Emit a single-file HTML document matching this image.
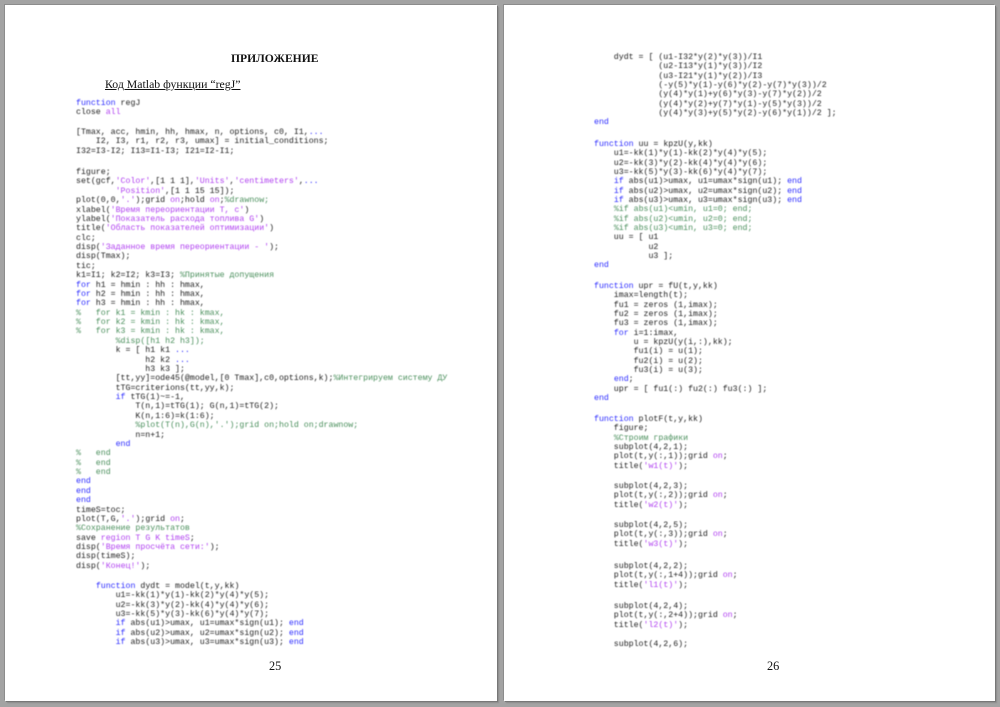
<!DOCTYPE html>
<html lang="ru">
<head>
<meta charset="utf-8">
<title>Приложение</title>
<style>
html,body{margin:0;padding:0;background:#a3a3a3;width:1000px;height:707px;overflow:hidden}
.page{position:absolute;top:5px;height:696px;background:#fff;box-shadow:1px 1px 0 #777,2px 2px 1px #8c8c8c,-1px -1px 0 #8c8c8c}
#p1{left:5px;width:492px}
#p2{left:504px;width:491px}
.t{position:absolute;filter:blur(.35px)}
pre{position:absolute;margin:0;font:8.25px/9.35px "Liberation Mono","DejaVu Sans Mono",monospace;color:#1c1c1c;white-space:pre;filter:blur(.4px);margin-top:1px}
.serif{font-family:"Liberation Serif","Noto Serif CJK SC",serif;color:#111;white-space:nowrap}
.k{color:#2a2aff}
.s{color:#b040f0}
.c{color:#4a8f5c}
</style>
</head>
<body>
<div class="page" id="p1"></div>
<div class="page" id="p2"></div>

<div class="t serif" style="left:231px;top:52px;font-size:11.6px;font-weight:bold;line-height:14px">ПРИЛОЖЕНИЕ</div>
<div class="t serif" style="left:105px;top:77px;font-size:11.8px;line-height:14px;text-decoration:underline">Код Matlab функции “regJ”</div>
<div class="t serif" style="left:269px;top:659px;font-size:12.3px;line-height:14px">25</div>
<div class="t serif" style="left:767px;top:659px;font-size:12.3px;line-height:14px">26</div>

<pre style="left:76px;top:98px"><span class="k">function</span> regJ
close <span class="s">all</span></pre>

<pre style="left:76px;top:127px">[Tmax, acc, hmin, hh, hmax, n, options, c0, I1,<span class="k">...</span>
    I2, I3, r1, r2, r3, umax] = initial_conditions;
I32=I3-I2; I13=I1-I3; I21=I2-I1;</pre>

<pre style="left:76px;top:167px;line-height:9.37px">figure;
set(gcf,<span class="s">'Color'</span>,[1 1 1],<span class="s">'Units'</span>,<span class="s">'centimeters'</span>,<span class="k">...</span>
        <span class="s">'Position'</span>,[1 1 15 15]);
plot(0,0,<span class="s">'.'</span>);grid <span class="s">on</span>;hold <span class="s">on</span>;<span class="c">%drawnow;</span>
xlabel(<span class="s">'Время переориентации Т, с'</span>)
ylabel(<span class="s">'Показатель расхода топлива G'</span>)
title(<span class="s">'Область показателей оптимизации'</span>)
clc;
disp(<span class="s">'Заданное время переориентации - '</span>);
disp(Tmax);
tic;
k1=I1; k2=I2; k3=I3; <span class="c">%Принятые допущения</span>
<span class="k">for</span> h1 = hmin : hh : hmax,
<span class="k">for</span> h2 = hmin : hh : hmax,
<span class="k">for</span> h3 = hmin : hh : hmax,
<span class="c">%   for k1 = kmin : hk : kmax,</span>
<span class="c">%   for k2 = kmin : hk : kmax,</span>
<span class="c">%   for k3 = kmin : hk : kmax,</span>
        <span class="c">%disp([h1 h2 h3]);</span>
        k = [ h1 k1 <span class="k">...</span>
              h2 k2 <span class="k">...</span>
              h3 k3 ];
        [tt,yy]=ode45(@model,[0 Tmax],c0,options,k);<span class="c">%Интегрируем систему ДУ</span>
        tTG=criterions(tt,yy,k);
        <span class="k">if</span> tTG(1)~=-1,
            T(n,1)=tTG(1); G(n,1)=tTG(2);
            K(n,1:6)=k(1:6);
            <span class="c">%plot(T(n),G(n),'.');grid on;hold on;drawnow;</span>
            n=n+1;
        <span class="k">end</span>
<span class="c">%   end</span>
<span class="c">%   end</span>
<span class="c">%   end</span>
<span class="k">end</span>
<span class="k">end</span>
<span class="k">end</span>
timeS=toc;
plot(T,G,<span class="s">'.'</span>);grid <span class="s">on</span>;
<span class="c">%Сохранение результатов</span>
save <span class="s">region T G K timeS</span>;
disp(<span class="s">'Время просчёта сети:'</span>);
disp(timeS);
disp(<span class="s">'Конец!'</span>);</pre>

<pre style="left:76px;top:581px">    <span class="k">function</span> dydt = model(t,y,kk)
        u1=-kk(1)*y(1)-kk(2)*y(4)*y(5);
        u2=-kk(3)*y(2)-kk(4)*y(4)*y(6);
        u3=-kk(5)*y(3)-kk(6)*y(4)*y(7);
        <span class="k">if</span> abs(u1)&gt;umax, u1=umax*sign(u1); <span class="k">end</span>
        <span class="k">if</span> abs(u2)&gt;umax, u2=umax*sign(u2); <span class="k">end</span>
        <span class="k">if</span> abs(u3)&gt;umax, u3=umax*sign(u3); <span class="k">end</span></pre>

<pre style="left:594px;top:52px">    dydt = [ (u1-I32*y(2)*y(3))/I1
             (u2-I13*y(1)*y(3))/I2
             (u3-I21*y(1)*y(2))/I3
             (-y(5)*y(1)-y(6)*y(2)-y(7)*y(3))/2
             (y(4)*y(1)+y(6)*y(3)-y(7)*y(2))/2
             (y(4)*y(2)+y(7)*y(1)-y(5)*y(3))/2
             (y(4)*y(3)+y(5)*y(2)-y(6)*y(1))/2 ];
<span class="k">end</span></pre>

<pre style="left:594px;top:139px"><span class="k">function</span> uu = kpzU(y,kk)
    u1=-kk(1)*y(1)-kk(2)*y(4)*y(5);
    u2=-kk(3)*y(2)-kk(4)*y(4)*y(6);
    u3=-kk(5)*y(3)-kk(6)*y(4)*y(7);
    <span class="k">if</span> abs(u1)&gt;umax, u1=umax*sign(u1); <span class="k">end</span>
    <span class="k">if</span> abs(u2)&gt;umax, u2=umax*sign(u2); <span class="k">end</span>
    <span class="k">if</span> abs(u3)&gt;umax, u3=umax*sign(u3); <span class="k">end</span>
    <span class="c">%if abs(u1)&lt;umin, u1=0; end;</span>
    <span class="c">%if abs(u2)&lt;umin, u2=0; end;</span>
    <span class="c">%if abs(u3)&lt;umin, u3=0; end;</span>
    uu = [ u1
           u2
           u3 ];
<span class="k">end</span></pre>

<pre style="left:594px;top:281px"><span class="k">function</span> upr = fU(t,y,kk)
    imax=length(t);
    fu1 = zeros (1,imax);
    fu2 = zeros (1,imax);
    fu3 = zeros (1,imax);
    <span class="k">for</span> i=1:imax,
        u = kpzU(y(i,:),kk);
        fu1(i) = u(1);
        fu2(i) = u(2);
        fu3(i) = u(3);
    <span class="k">end</span>;
    upr = [ fu1(:) fu2(:) fu3(:) ];
<span class="k">end</span></pre>

<pre style="left:594px;top:414px"><span class="k">function</span> plotF(t,y,kk)
    figure;
    <span class="c">%Строим графики</span>
    subplot(4,2,1);
    plot(t,y(:,1));grid <span class="s">on</span>;
    title(<span class="s">'w1(t)'</span>);</pre>

<pre style="left:594px;top:481px">    subplot(4,2,3);
    plot(t,y(:,2));grid <span class="s">on</span>;
    title(<span class="s">'w2(t)'</span>);</pre>

<pre style="left:594px;top:520px">    subplot(4,2,5);
    plot(t,y(:,3));grid <span class="s">on</span>;
    title(<span class="s">'w3(t)'</span>);</pre>

<pre style="left:594px;top:561px">    subplot(4,2,2);
    plot(t,y(:,1+4));grid <span class="s">on</span>;
    title(<span class="s">'l1(t)'</span>);</pre>

<pre style="left:594px;top:601px">    subplot(4,2,4);
    plot(t,y(:,2+4));grid <span class="s">on</span>;
    title(<span class="s">'l2(t)'</span>);</pre>

<pre style="left:594px;top:639px">    subplot(4,2,6);</pre>
</body>
</html>
